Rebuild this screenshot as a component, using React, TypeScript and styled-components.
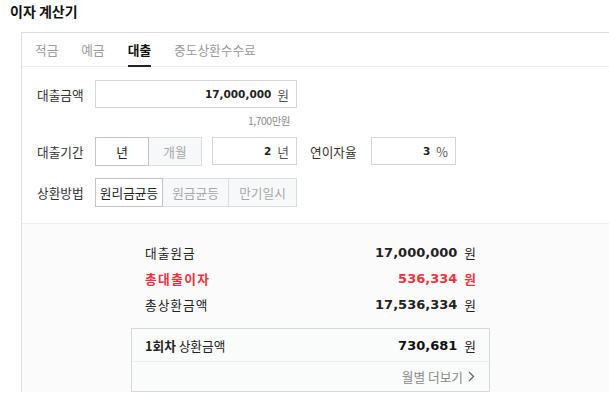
import React from "react";
import styled, { createGlobalStyle } from "styled-components";

const KR = `"Noto Sans CJK KR", "Noto Sans", sans-serif`;
const NUM = `"DejaVu Sans", "Noto Sans CJK KR", sans-serif`;

const Global = createGlobalStyle`
  html, body { margin: 0; padding: 0; background: #fff; overflow: hidden; }
  body { font-family: ${KR}; color: #222; width: 609px; }
  * { box-sizing: border-box; }
`;

const Title = styled.h1`
  margin: 0 0 10px 0;
  padding-left: 10px;
  height: 22px;
  line-height: 22px;
  font-size: 14px;
  font-weight: 700;
  color: #111;
`;

const Panel = styled.section`
  margin-left: 21px;
  width: 588px;
  border-top: 1px solid #dcdee3;
  border-left: 1px solid #dcdee3;
`;

const Tabs = styled.nav`
  display: flex;
  gap: 23px;
  padding-left: 13px;
  height: 34px;
  border-bottom: 1px solid #eeeeee;
`;

const Tab = styled.div<{ $active?: boolean }>`
  height: 34px;
  line-height: 33px;
  font-size: 12.7px;
  color: ${(p) => (p.$active ? "#111" : "#9a9a9a")};
  font-weight: ${(p) => (p.$active ? 700 : 400)};
  border-bottom: 2px solid ${(p) => (p.$active ? "#222" : "transparent")};
  margin-bottom: -1px;
`;

const Form = styled.div`
  padding: 13px 0 17px 15px;
  display: flex;
  flex-direction: column;
`;

const Row = styled.div<{ $mt?: number }>`
  display: flex;
  align-items: center;
  height: 28px;
  margin-top: ${(p) => p.$mt ?? 0}px;
`;

const Label = styled.div<{ $w: number; $ml?: number }>`
  width: ${(p) => p.$w}px;
  margin-left: ${(p) => p.$ml ?? 0}px;
  font-size: 12.7px;
  color: #333;
  flex-shrink: 0;
`;

const Field = styled.div<{ $w: number; $ml?: number }>`
  width: ${(p) => p.$w}px;
  height: 28px;
  margin-left: ${(p) => p.$ml ?? 0}px;
  border: 1px solid #d6d6d6;
  background: #fff;
  display: flex;
  align-items: center;
  justify-content: flex-end;
  padding-right: 7px;
  gap: 6px;
  flex-shrink: 0;
`;

const FieldNum = styled.span`
  font-family: ${NUM};
  font-weight: 700;
  font-size: 10.5px;
  color: #222;
`;

const Unit = styled.span`
  font-size: 12.7px;
  color: #555;
`;

const Hint = styled.div`
  width: 253px;
  text-align: right;
  font-size: 10.5px;
  letter-spacing: -0.5px;
  color: #8a8a8a;
  line-height: 14px;
  margin-top: 6px;
`;

const Seg = styled.div`
  display: flex;
  flex-shrink: 0;
`;

const SegBtn = styled.div<{ $w: number; $on?: boolean }>`
  width: ${(p) => p.$w}px;
  height: 29px;
  display: flex;
  align-items: center;
  justify-content: center;
  font-size: 12.7px;
  background: ${(p) => (p.$on ? "#fff" : "#f7f8fa")};
  color: ${(p) => (p.$on ? "#222" : "#a8a8a8")};
  border: 1px solid ${(p) => (p.$on ? "#c4c4c4" : "#dcdde0")};
  margin-left: -1px;
  position: relative;
  z-index: ${(p) => (p.$on ? 1 : 0)};
  &:first-child { margin-left: 0; }
`;

const Result = styled.div`
  background: #fbfbfb;
  border-top: 1px solid #eeeeee;
  padding: 15px 0 0 109px;
`;

const Summary = styled.div`
  width: 359px;
  display: flex;
  flex-direction: column;
`;

const SumRow = styled.div<{ $red?: boolean }>`
  display: flex;
  align-items: center;
  justify-content: space-between;
  height: 26px;
  padding: 0 14px;
  color: ${(p) => (p.$red ? "#f0323f" : "#222")};
`;

const SumLabel = styled.span<{ $bold?: boolean }>`
  font-size: 12.7px;
  letter-spacing: ${(p) => (p.$bold ? "1.4px" : "1px")};
  font-weight: ${(p) => (p.$bold ? 700 : 400)};
`;

const Amount = styled.span`
  display: flex;
  align-items: center;
  gap: 7px;
`;

const BigNum = styled.span<{ $dark?: boolean }>`
  font-family: ${NUM};
  font-weight: 700;
  font-size: 13px;
  color: ${(p) => (p.$dark ? "#111" : "inherit")};
`;

const Won = styled.span<{ $bold?: boolean }>`
  font-size: 12.7px;
  font-weight: ${(p) => (p.$bold ? 700 : 400)};
`;

const Box = styled.div`
  margin-top: 11px;
  border: 1px solid #d8d8d8;
  background: #fafbfb;
`;

const BoxTop = styled.div`
  display: flex;
  align-items: center;
  justify-content: space-between;
  height: 33px;
  padding: 0 13px;
  border-bottom: 1px solid #eeeeee;
`;

const BoxLabel = styled.span`
  font-size: 12.7px;
  color: #222;
  b { font-weight: 700; }
`;

const More = styled.div`
  height: 29px;
  display: flex;
  align-items: center;
  justify-content: flex-end;
  gap: 5px;
  padding-right: 14px;
  font-size: 12.7px;
  color: #8a8a8a;
`;

export default function App() {
  return (
    <>
      <Global />
      <Title>이자 계산기</Title>
      <Panel>
        <Tabs>
          <Tab>적금</Tab>
          <Tab>예금</Tab>
          <Tab $active>대출</Tab>
          <Tab>중도상환수수료</Tab>
        </Tabs>
        <Form>
          <Row>
            <Label $w={58}>대출금액</Label>
            <Field $w={202}>
              <FieldNum>17,000,000</FieldNum>
              <Unit>원</Unit>
            </Field>
          </Row>
          <Hint>1,700만원</Hint>
          <Row $mt={9}>
            <Label $w={58}>대출기간</Label>
            <Seg>
              <SegBtn $w={54} $on>년</SegBtn>
              <SegBtn $w={54}>개월</SegBtn>
            </Seg>
            <Field $w={85} $ml={10}>
              <FieldNum>2</FieldNum>
              <Unit>년</Unit>
            </Field>
            <Label $w={61} $ml={13}>연이자율</Label>
            <Field $w={85}>
              <FieldNum>3</FieldNum>
              <Unit>%</Unit>
            </Field>
          </Row>
          <Row $mt={13}>
            <Label $w={58}>상환방법</Label>
            <Seg>
              <SegBtn $w={68} $on>원리금균등</SegBtn>
              <SegBtn $w={67}>원금균등</SegBtn>
              <SegBtn $w={69}>만기일시</SegBtn>
            </Seg>
          </Row>
        </Form>
        <Result>
          <Summary>
            <SumRow>
              <SumLabel>대출원금</SumLabel>
              <Amount>
                <BigNum>17,000,000</BigNum>
                <Won>원</Won>
              </Amount>
            </SumRow>
            <SumRow $red>
              <SumLabel $bold>총대출이자</SumLabel>
              <Amount>
                <BigNum>536,334</BigNum>
                <Won $bold>원</Won>
              </Amount>
            </SumRow>
            <SumRow>
              <SumLabel>총상환금액</SumLabel>
              <Amount>
                <BigNum>17,536,334</BigNum>
                <Won>원</Won>
              </Amount>
            </SumRow>
            <Box>
              <BoxTop>
                <BoxLabel>
                  <b>1회차</b> 상환금액
                </BoxLabel>
                <Amount>
                  <BigNum $dark>730,681</BigNum>
                  <Won>원</Won>
                </Amount>
              </BoxTop>
              <More>
                월별 더보기
                <svg width="7" height="11" viewBox="0 0 7 11">
                  <path d="M1 1l4.5 4.5L1 10" fill="none" stroke="#666" strokeWidth="1.3" />
                </svg>
              </More>
            </Box>
          </Summary>
        </Result>
      </Panel>
    </>
  );
}
